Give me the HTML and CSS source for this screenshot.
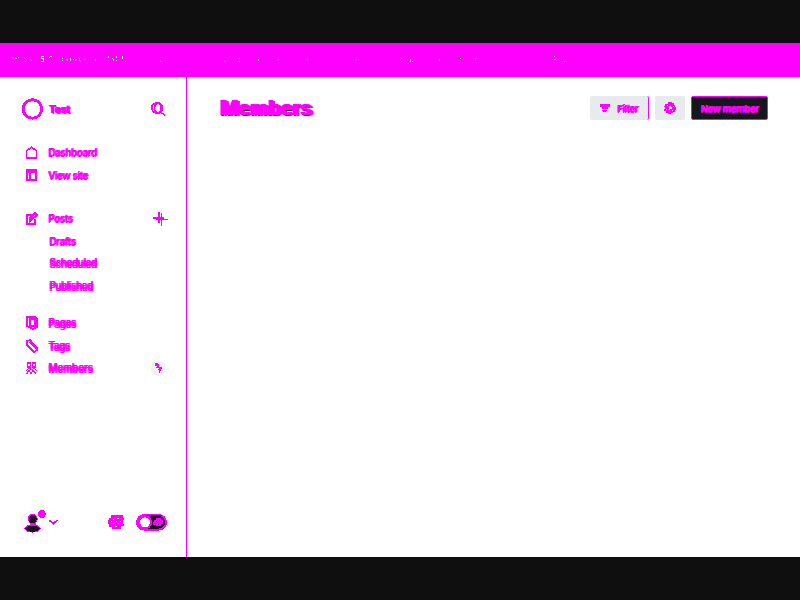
FILE: index.html
```
<!DOCTYPE html>
<html lang="en">
<head>
<meta charset="utf-8">
<title>Members</title>
<link rel="stylesheet" href="styles.css">
</head>
<body>
<div class="window">
<header class="banner">
<svg width="800" height="34" viewBox="0 0 800 34" fill="none" stroke="#fff" stroke-width="1" shape-rendering="crispEdges"><path d="M12 14.500h1M13 15.500h1M15 15.500h2M18 14.500h1M25 18.500h1M30 16.500h1M31 17.500h1M41 13.500h3M41 14.500h1M41 15.500h3M43 16.500h1M43 17.500h1M41 18.500h3M49 14.500h1M50 13.500h2M62 15.500h1M62 17.500h1M66 16.500h1M67 16.500h1M67 17.500h1M70 15.500h1M70 16.500h1M70 17.500h1M73 16.500h1M75 17.500h1M76 16.500h1M79 15.500h1M79 17.500h1M80 18.500h1M84 16.500h1M95 16.500h1M95 17.500h1M108 13.500h1M108 14.500h1M113 16.500h1M113 17.500h1M112 15.500h1M116 13.500h1M116 14.500h1M116 17.500h1M122 13.500h1M122 14.500h1M122 15.500h1M125 18.500h1M160 18.500h1M224 18.500h1M239 15.500h1M239 18.500h1M258 16.500h1M258 17.500h1M278 16.500h1M307 16.500h1M356 16.500h1M401 15.500h1M410 16.500h1M410 17.500h1M410 18.500h1M412 18.500h1M439 16.500h1M439 17.500h1M460 15.500h1M475 15.500h1M554 13.500h1M554 16.500h2M564 18.500h1"/></svg>
</header>
<div class="body">
<aside class="sidebar">
<div class="brand"><svg class="logo" width="22" height="22" viewBox="0 0 22 22" shape-rendering="crispEdges"><circle cx="10.500" cy="11" r="9.200" fill="none" stroke="#f0f" stroke-width="2.800"/></svg><b>Test</b><svg class="search" width="15" height="15" viewBox="0 0 15 15" fill="none" stroke="#f0f" stroke-width="1.700" shape-rendering="crispEdges"><ellipse cx="5.500" cy="6" rx="4.700" ry="5"/><ellipse cx="7.500" cy="6" rx="4" ry="5"/><path d="M9 10l5 3"/></svg></div>
<nav>
<a><svg width="12" height="13" viewBox="0 0 12 13" shape-rendering="crispEdges"><path d="M.7 12V5L5.500 1l5 4v7z" fill="none" stroke="#f0f" stroke-width="1.500"/><path d="M0 10.500h11V13H0z" fill="#f0f"/></svg><span>Dashboard</span></a>
<a><svg width="12" height="12" viewBox="0 0 12 12" shape-rendering="crispEdges"><path d="M1 1h9v10H1zM1 3h10M4 3v8" fill="none" stroke="#f0f" stroke-width="2"/></svg><span>View site</span></a>
<a class="posts"><svg width="12" height="13" viewBox="0 0 12 13" shape-rendering="crispEdges"><path d="M6 3H1v9h8V7M4 9V6l5-5 2 2-6 5z" fill="none" stroke="#f0f" stroke-width="2"/></svg><span>Posts</span><svg class="plus" width="15" height="14" viewBox="0 0 15 14" fill="#f0f" shape-rendering="crispEdges"><path d="M0 5h11v2H0zM3 7h12v1H3zM5 0h2v11H5zM8 1h1v13H8z"/></svg></a>
<a class="sub"><span>Drafts</span></a>
<a class="sub"><span class="double">Scheduled</span></a>
<a class="sub"><span class="double">Published</span></a>
<a class="pages"><svg width="12" height="14" viewBox="0 0 12 14" shape-rendering="crispEdges"><path d="M1 1h8l2 2v8l-4 2-6-3zM4 3h5v7H4z" fill="none" stroke="#f0f" stroke-width="1.600"/></svg><span class="double">Pages</span></a>
<a><svg width="12" height="14" viewBox="0 0 12 14" shape-rendering="crispEdges"><path d="M1 6V2l3-1 7 8v2l-3 2-7-7M4 3l7 7" fill="none" stroke="#f0f" stroke-width="1.700"/></svg><span class="double">Tags</span></a>
<a><svg width="12" height="13" viewBox="0 0 12 13" shape-rendering="crispEdges"><path d="M1 12l2-4 2 4 2-4 3 4M0 9l3-3 3 2 2-2 3 3M1.500 1h3v4h-3zM6.500 1h3v4h-3z" fill="none" stroke="#f0f" stroke-width="1.300"/></svg><span class="double wide">Members</span><i class="count"><svg width="7" height="10" viewBox="0 0 7 10" shape-rendering="crispEdges" fill="#f0f"><path d="M0 0h3v1h1v3h3v2H6v2H5v2H4V7H3V6h1V5H1V4h1V3H0z"/></svg></i></a>
</nav>
<div class="account">
<svg width="34" height="26" viewBox="0 0 34 26"><circle cx="11" cy="13" r="10.500" fill="#fff" stroke="#f0f1f3"/><g shape-rendering="crispEdges"><path d="M9 13h6v4H9z" fill="#f0f"/><circle cx="11.700" cy="9.800" r="5" fill="#f0f"/><circle cx="11.700" cy="10.200" r="4" fill="#15171a"/><ellipse cx="11.500" cy="19.500" rx="8.200" ry="4" fill="#f0f"/><ellipse cx="11.500" cy="19.700" rx="7.200" ry="3" fill="#15171a"/><circle cx="20.700" cy="5" r="3.900" fill="#f0f"/></g></svg>
<svg class="chev" width="10" height="6" viewBox="0 0 10 6" shape-rendering="crispEdges"><path d="M.5 1.500l4 3 4-3.500" fill="none" stroke="#f0f" stroke-width="1.700"/></svg>
<svg class="cog" width="16" height="16" viewBox="0 0 16 16" shape-rendering="crispEdges"><path d="M3 1h12v3h1v2h-1v4h1v2h-3v3H4v-2H1v-3H0V6h1V4h2z" fill="#f0f"/><path d="M5 5.500h1M9 4.500h2M5 9.500h1M8 7.500h1M10 9.500h1M7 12.500h2M3 7.500h1M12 7.500h1" stroke="#fff"/></svg>
<svg class="toggle" width="32" height="17" viewBox="0 0 32 17" shape-rendering="crispEdges"><rect x="1" y="1.200" width="29" height="14.300" rx="7.100" fill="#15171a" stroke="#f0f" stroke-width="2"/><path d="M8 1.500h18" stroke="#15171a"/><path d="M7 .5h18" stroke="#f0f"/><circle cx="9" cy="8.300" r="6" fill="#fff" stroke="#f0f" stroke-width="2"/><path d="M18 6h2V4h5v2h2v4h-2v2h-5v-1h-3V8h1z" fill="#f0f"/><path d="M20 7.500h1M23 6.500h1M22 10.500h1" stroke="#15171a"/></svg>
</div>
</aside>
<main>
<h1>Members</h1>
<div class="actions"><button class="filter"><svg width="10" height="9" viewBox="0 0 10 9" fill="#f0f" shape-rendering="crispEdges"><path d="M0 0h10v3H8v2H2V3H0zM2 6h5v1H6v1H3V7H2z"/></svg><span>Filter</span></button><button class="settings"><svg width="12" height="12" viewBox="0 0 12 12" shape-rendering="crispEdges"><path d="M4 0h4v1h2v2h1v2h1v3h-1v2H9v1H7v1H4v-1H2V9H0V7h1V5H0V4h1V2h3z" fill="#f0f"/><path d="M5 4h2v1h1v2H6v1H5zM3 3h1v1H3zM8 8h1v1H8zM2 7h1v1H2zM9 4h1v1H9z" fill="#e7ebee"/></svg></button><button class="new"><span>New member</span></button></div>
</main>
</div>
</div>
</body>
</html>
```
FILE: styles.css
```
* { box-sizing: border-box; }
body { margin: 0; background: #0f0f0f; font-family: Inter, sans-serif; color: #f0f; }
.window { height: 600px; padding: 43px 0; display: flex; flex-direction: column; }
.banner { height: 34px; background: #f0f; flex: none; }
svg { display: block; flex: none; }
.body { display: flex; flex: 1; background: #fff; }
.sidebar { width: 187px; border-right: 1px solid #f0f; display: flex; flex-direction: column; }
.brand { display: flex; align-items: center; height: 24px; margin: 20px 20px 0 22px; font-size: 10px; }
.brand b { margin-left: 5px; text-shadow: 1px 0 #f0f, -.5px 0 #f0f, 1px 1px #f0f; letter-spacing: -.1px; }
.search { margin-left: auto; }
nav { padding: 20px 18px 0 26px; }
nav a { display: flex; align-items: center; height: 22.500px; font-size: 10px; font-weight: 500; letter-spacing: -.4px; }
nav a > span { margin-left: 10px; text-shadow: 1px 0 #f0f, 0 .5px #f0f; }
nav a > .double { text-shadow: 1px 0 #f0f, 0 2px #f0f, 1px 2px #f0f; position: relative; top: -1px; }
nav a > .wide { letter-spacing: -.1px; }
.posts { margin-top: 21px; }
.plus { margin-left: auto; position: relative; top: 1px; }
.sub { padding-left: 13px; }
.pages { margin-top: 15px; }
.count { margin: 0 2px 0 auto; width: 15px; height: 15px; border-radius: 50%; background: #eff1f2; display: flex; align-items: center; justify-content: center; }
.account { display: flex; align-items: center; margin: auto 18px 22px 21px; }
.chev { margin-left: -6px; }
.cog { margin-left: auto; }
.toggle { margin-left: 12px; }
main { flex: 1; display: flex; justify-content: space-between; align-items: flex-start; padding: 19px 32px 0; }
h1 { margin: 0; font-size: 20px; line-height: 24px; font-weight: 600; letter-spacing: 0; text-shadow: 2px 0 #f0f, 1px 1px #15171a, 4px 1px #f0f; }
.actions { display: flex; }
button { height: 24px; border: 0; border-radius: 2px; background: #e7ebee; color: #f0f; font: 600 9.500px Inter, sans-serif; letter-spacing: -.4px; display: flex; align-items: center; justify-content: center; padding: 0; }
button span { text-shadow: 1px 0 #f0f, 0 1px #f0f; }
.filter { width: 59px; gap: 7px; border-right: 1px solid #f0f; margin-right: 6px; }
.settings { width: 30px; margin-right: 6px; }
.new { width: 77px; background: #15171a; border: 1px solid #f0f; letter-spacing: -.3px; }
```
